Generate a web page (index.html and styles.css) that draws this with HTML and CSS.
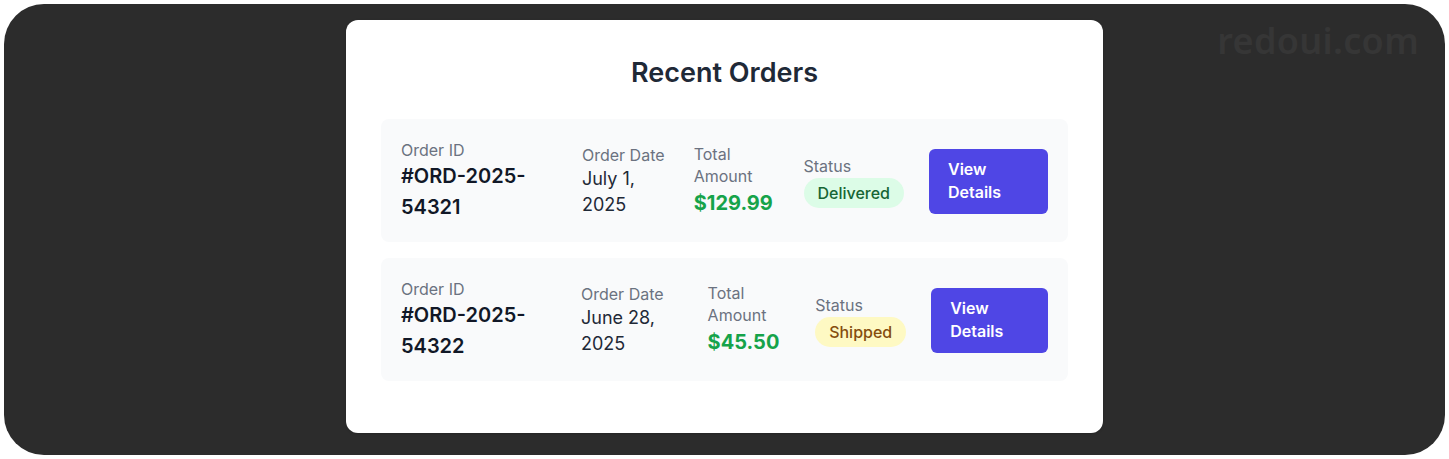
FILE: index.html
```html
<!DOCTYPE html>
<html lang="en">
<head>
<meta charset="utf-8">
<title>Recent Orders</title>
<link rel="stylesheet" href="styles.css">
</head>
<body>
<div class="frame">
  <div class="watermark">redoui.com</div>
  <section class="card">
    <h2 class="title">Recent Orders</h2>
    <div class="order">
      <div class="col col-id">
        <div class="label">Order ID</div>
        <div class="order-id">#ORD-2025-54321</div>
      </div>
      <div class="col col-date">
        <div class="label">Order Date</div>
        <div class="date">July 1, 2025</div>
      </div>
      <div class="col col-amount">
        <div class="label">Total Amount</div>
        <div class="amount">$129.99</div>
      </div>
      <div class="col col-status">
        <div class="label">Status</div>
        <span class="badge badge-delivered">Delivered</span>
      </div>
      <button class="btn">View Details</button>
    </div>
    <div class="order">
      <div class="col col-id">
        <div class="label">Order ID</div>
        <div class="order-id">#ORD-2025-54322</div>
      </div>
      <div class="col col-date">
        <div class="label">Order Date</div>
        <div class="date">June 28, 2025</div>
      </div>
      <div class="col col-amount">
        <div class="label">Total Amount</div>
        <div class="amount">$45.50</div>
      </div>
      <div class="col col-status">
        <div class="label">Status</div>
        <span class="badge badge-shipped">Shipped</span>
      </div>
      <button class="btn">View Details</button>
    </div>
  </section>
</div>
</body>
</html>
```
FILE: styles.css
```css
* { box-sizing: border-box; }
html, body { margin: 0; padding: 0; background: #ffffff; }
body {
  padding: 4px;
  font-family: Inter, "Noto Sans", Arial, sans-serif;
}
.frame {
  position: relative;
  height: 451px;
  background: #2c2c2c;
  border-radius: 40px;
  display: flex;
  justify-content: center;
  align-items: flex-start;
  padding-top: 16px;
}
.watermark {
  position: absolute;
  top: 19px;
  right: 26px;
  font-family: "Noto Sans", Lato, sans-serif;
  font-size: 36px;
  font-weight: 600;
  line-height: 1;
  color: #363636;
  letter-spacing: 0.3px;
}
.card {
  width: 757px;
  background: #ffffff;
  border-radius: 12px;
  padding: 35px 35px 36px;
  box-shadow: 0 1px 3px rgba(0,0,0,0.15);
}
.title {
  margin: 0 0 28px;
  text-align: center;
  font-size: 27px;
  line-height: 36px;
  font-weight: 600;
  color: #1f2937;
}
.order {
  display: flex;
  align-items: center;
  justify-content: space-between;
  gap: 25px;
  background: #f9fafb;
  border-radius: 8px;
  padding: 20px 20px 19px;
  margin-bottom: 16px;
}
.label {
  font-size: 16px;
  line-height: 22px;
  color: #6b7280;
}
.order-id {
  font-size: 20px;
  line-height: 31px;
  font-weight: 600;
  color: #111827;
}
.date {
  font-size: 18px;
  line-height: 26px;
  color: #1f2937;
}
.amount {
  font-size: 20px;
  line-height: 32px;
  font-weight: 700;
  color: #16a34a;
}
.col-status .label { margin-bottom: 1px; }
.badge {
  display: inline-block;
  padding: 4px 14px;
  border-radius: 9999px;
  font-size: 16px;
  line-height: 22px;
  font-weight: 500;
}
.badge-delivered { background: #dcfce7; color: #166534; }
.badge-shipped { background: #fef9c3; color: #854d0e; }
.btn {
  border: none;
  background: #4f46e5;
  color: #ffffff;
  font-family: inherit;
  font-size: 16px;
  line-height: 23px;
  font-weight: 600;
  padding: 9px 19px 10px;
  border-radius: 6px;
  text-align: left;
  cursor: pointer;
}
```
